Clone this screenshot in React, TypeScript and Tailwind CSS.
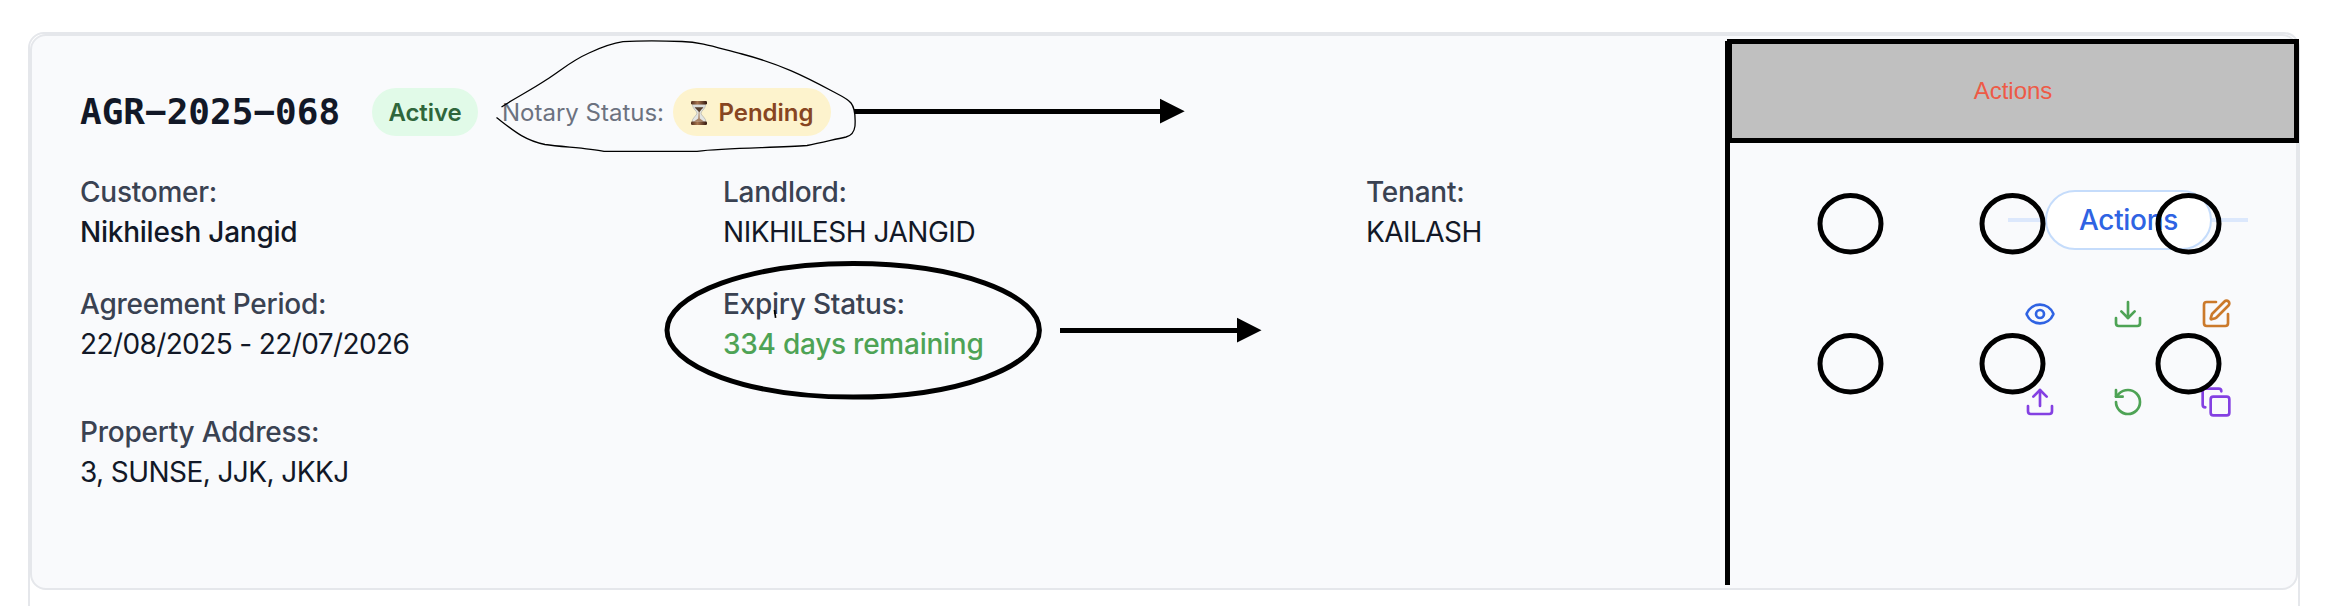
import React from "react";
import { Copy, Download, Eye, RotateCcw, SquarePen, Upload } from "lucide-react";

function Field({ label, value, tone }: { label: string; value: string; tone: string }) {
  return (
    <div className="text-[28px] leading-10">
      <div className="font-medium tracking-[-0.25px] text-[#3a4252]">{label}</div>
      <div className={tone}>{value}</div>
    </div>
  );
}

function Hourglass() {
  return (
    <svg width="18" height="26" viewBox="0 0 18 26" className="mr-2.5">
      <defs>
        <linearGradient id="cap" x1="0" x2="1" y1="0" y2="0">
          <stop offset="0" stopColor="#50301f" />
          <stop offset="0.4" stopColor="#a87650" />
          <stop offset="1" stopColor="#33190f" />
        </linearGradient>
      </defs>
      <path d="M2.500 4.500C2.500 9 7 11 7 13.200S2 18 2 22h14c0-4-5-6.600-5-8.800S15.500 9 15.500 4.500z" fill="#e3e5e3" stroke="#b8b6ac" strokeWidth="0.8" />
      <path d="M3 4.500h12c-.2 3-2.300 4.500-6 4.700C5.300 9 3.200 7.500 3 4.500z" fill="#dcdedb" />
      <path d="M4.600 7.200h8.800c-1 1.800-2.800 2.700-4.200 5.300C8 10 5.600 9 4.600 7.200z" fill="#57402f" />
      <path d="M8.700 12h.7l.4 6.500 4.200 3H4l4.200-3z" fill="#a98466" />
      <rect x="1" y="1" width="16" height="3.400" rx="1.200" fill="url(#cap)" />
      <rect x="1" y="21.600" width="16" height="3.400" rx="1.200" fill="url(#cap)" />
    </svg>
  );
}

const rings = [
  [1850.5, 223.8], [2012.5, 223.8], [2188.5, 223.8],
  [1850.5, 363.8], [2012.5, 363.8], [2188.5, 363.8],
];

function Annotations() {
  return (
    <svg className="pointer-events-none absolute left-0 top-0" width="2328" height="606" viewBox="0 0 2328 606" fill="none" stroke="#000">
      <path strokeWidth="1.300" d="M501.500 107C515 98 531 90 546 80C563 69 571 61 589 53C602 47 614 43 623 41.700C640 40.700 667 41 682 41.500C702 42 718 48 742 54C780 64 804 76 832 91C841 96 847 98 851 103C855 108 855.500 117 855 126C854 134 850 136 846 137C832 140 820 143 807 145.500C778 148 727 147.500 697 151.300H604C588 148 562 147 545 144.500C524 140 514 131 496.500 117.500" />
      <path strokeWidth="1.700" d="M774.500 310L775.600 317.800" />
      <path strokeWidth="5" d="M854 111.500H1162M1060 330.500H1240" />
      <path fill="#000" stroke="none" d="M1160 98.700L1184.700 111.200L1160 123.500zM1237 317.700L1261.500 330.200L1237 342.500z" />
      <ellipse cx="853.200" cy="330.300" rx="186.200" ry="66.800" strokeWidth="5" />
      {rings.map(([cx, cy]) => (
        <ellipse key={`${cx}-${cy}`} cx={cx} cy={cy} rx="30.500" ry="28.200" strokeWidth="5" />
      ))}
      <path strokeWidth="5" d="M1727.500 41V585" />
    </svg>
  );
}

export default function App() {
  return (
    <div className="relative h-[606px] w-[2328px] overflow-hidden bg-white px-7 pt-8 font-['Inter',sans-serif] antialiased">
      <div className="h-[620px] w-[2272px] rounded-2xl border-2 border-[#e5e7eb] bg-white">
        <div className="flex h-[556px] rounded-2xl border-2 border-[#e5e7eb] bg-[#f9fafc]">
          <main className="w-[1929px] shrink-0 pl-12 pt-[52px]">
            <div className="flex h-12 items-center whitespace-nowrap">
              <h1 className="w-[292px] font-['DejaVu_Sans_Mono',monospace] text-[36px] font-bold leading-[48px] text-[#121827]">AGR−2025−068</h1>
              <span className="flex h-12 w-[106px] items-center justify-center rounded-full bg-[#e1fae8] pt-px text-2xl font-semibold tracking-[-0.1px] text-[#2f663b]">Active</span>
              <span className="ml-6 w-[171px] pt-px text-2xl text-[#6c7280]">Notary Status:</span>
              <span className="flex h-12 w-[158px] items-center justify-center rounded-full bg-[#fdf3cd] pt-px text-2xl font-semibold text-[#874521]">
                <Hourglass />Pending
              </span>
            </div>
            <div className="mt-9 grid grid-cols-[643px_643px_1fr] gap-y-8">
              <Field label="Customer:" value="Nikhilesh Jangid" tone="font-medium tracking-[-0.24px] text-[#121827]" />
              <Field label="Landlord:" value="NIKHILESH JANGID" tone="tracking-[-0.46px] text-[#121827]" />
              <Field label="Tenant:" value="KAILASH" tone="tracking-[-0.55px] text-[#121827]" />
              <Field label="Agreement Period:" value="22/08/2025 - 22/07/2026" tone="tracking-[-0.61px] text-[#121827]" />
              <Field label="Expiry Status:" value="334 days remaining" tone="font-medium tracking-[-0.25px] text-[#4ea355]" />
            </div>
            <div className="mt-12">
              <Field label="Property Address:" value="3, SUNSE, JJK, JKKJ" tone="tracking-[-0.58px] text-[#121827]" />
            </div>
          </main>
          <aside className="ml-[47px] mt-[154px] w-60">
            <div className="flex h-[60px] items-center">
              <div className="h-1 w-[37px] bg-[#dce8fc]" />
              <div className="flex h-[60px] w-[167px] items-center justify-center rounded-full border-2 border-[#c5dcfb] bg-white text-[28px] font-medium tracking-[-0.3px] text-[#2f63e3]">Actions</div>
              <div className="h-1 flex-1 bg-[#dce8fc]" />
            </div>
            <div className="mt-12 grid grid-cols-[32px_32px_32px] justify-center gap-14">
              <Eye size={32} color="#2f63e3" />
              <Download size={32} color="#4ea355" />
              <SquarePen size={32} color="#cb7a2b" />
              <Upload size={32} color="#8440e2" />
              <RotateCcw size={32} color="#4ea355" />
              <Copy size={32} color="#8440e2" />
            </div>
          </aside>
        </div>
      </div>
      <Annotations />
      <div className="absolute left-[1727px] top-[39px] flex h-[104px] w-[572px] items-center justify-center border-[5px] border-black bg-[#c0c0c0] font-['Liberation_Sans',sans-serif] text-2xl text-[#ee5a46]">Actions</div>
    </div>
  );
}
